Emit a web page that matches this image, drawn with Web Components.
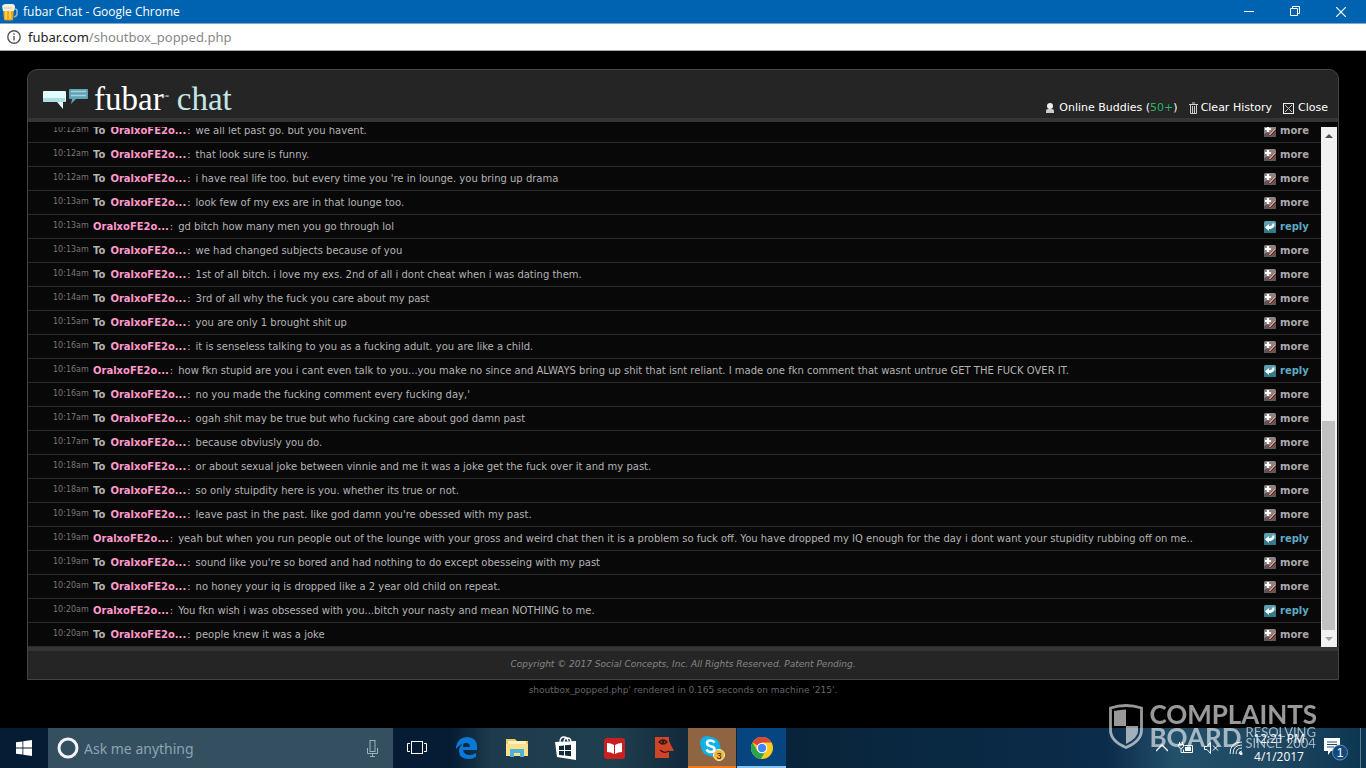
<!DOCTYPE html>
<html lang="en">
<head>
<meta charset="utf-8">
<title>fubar Chat</title>
<style>
    html, body { height: 100%; }
    body {
        margin: 0;
        display: flex;
        flex-direction: column;
        overflow: hidden;
        background: #000;
        color: #b4b4b4;
        font-family: "DejaVu Sans", Verdana, sans-serif;
        font-size: 10px;
    }
</style>
</head>
<body>
<window-bar>fubar Chat - Google Chrome</window-bar>
<address-bar host="fubar.com">/shoutbox_popped.php</address-bar>
<chat-page>
    <chat-message time="10:12am" to>we all let past go. but you havent.</chat-message>
    <chat-message time="10:12am" to>that look sure is funny.</chat-message>
    <chat-message time="10:12am" to>i have real life too. but every time you 're in lounge. you bring up drama</chat-message>
    <chat-message time="10:13am" to>look few of my exs are in that lounge too.</chat-message>
    <chat-message time="10:13am">gd bitch how many men you go through lol</chat-message>
    <chat-message time="10:13am" to>we had changed subjects because of you</chat-message>
    <chat-message time="10:14am" to>1st of all bitch. i love my exs. 2nd of all i dont cheat when i was dating them.</chat-message>
    <chat-message time="10:14am" to>3rd of all why the fuck you care about my past</chat-message>
    <chat-message time="10:15am" to>you are only 1 brought shit up</chat-message>
    <chat-message time="10:16am" to>it is senseless talking to you as a fucking adult. you are like a child.</chat-message>
    <chat-message time="10:16am">how fkn stupid are you i cant even talk to you...you make no since and ALWAYS bring up shit that isnt reliant. I made one fkn comment that wasnt untrue GET THE FUCK OVER IT.</chat-message>
    <chat-message time="10:16am" to>no you made the fucking comment every fucking day,'</chat-message>
    <chat-message time="10:17am" to>ogah shit may be true but who fucking care about god damn past</chat-message>
    <chat-message time="10:17am" to>because obviusly you do.</chat-message>
    <chat-message time="10:18am" to>or about sexual joke between vinnie and me it was a joke get the fuck over it and my past.</chat-message>
    <chat-message time="10:18am" to>so only stuipdity here is you. whether its true or not.</chat-message>
    <chat-message time="10:19am" to>leave past in the past. like god damn you're obessed with my past.</chat-message>
    <chat-message time="10:19am">yeah but when you run people out of the lounge with your gross and weird chat then it is a problem so fuck off. You have dropped my IQ enough for the day i dont want your stupidity rubbing off on me..</chat-message>
    <chat-message time="10:19am" to>sound like you're so bored and had nothing to do except obesseing with my past</chat-message>
    <chat-message time="10:20am" to>no honey your iq is dropped like a 2 year old child on repeat.</chat-message>
    <chat-message time="10:20am">You fkn wish i was obsessed with you...bitch your nasty and mean NOTHING to me.</chat-message>
    <chat-message time="10:20am" to>people knew it was a joke</chat-message>
    <span slot="copyright">Copyright © 2017 Social Concepts, Inc. All Rights Reserved. Patent Pending.</span>
    <span slot="rendered">shoutbox_popped.php' rendered in 0.165 seconds on machine '215'.</span>
</chat-page>
<task-bar></task-bar>
<board-mark></board-mark>

<script>
class BaseElement extends HTMLElement {
    constructor() {
        super();
        this.attachShadow({mode: "open"});
    }

    connectedCallback() {
        this.shadowRoot.innerHTML = this.getTemplate();
    }
}

class WindowBar extends BaseElement {
    getTemplate() {
        return `
        <style>
            :host {
                display: flex;
                align-items: center;
                flex: none;
                height: 23px;
                background: #0063b1;
                color: #fff;
                font: 12px "Open Sans", sans-serif;
            }
            svg { display: block; }
            .logo { margin: 0 5px 0 1px; }
            .title { flex: 1; }
            button {
                width: 46px;
                height: 23px;
                padding: 0;
                border: 0;
                background: none;
                display: grid;
                place-items: center;
            }
            button:last-child { margin-right: 2px; }
        </style>
        <svg class="logo" width="17" height="18" viewBox="0 0 17 18">
            <path d="M12 6h2q2 0 2 2v3q0 2-3 3" fill="none" stroke="#8fb6cf" stroke-width="1.600"/>
            <path d="M2 5h11l-1 12q-4 1-9 0z" fill="#f0a818"/>
            <path d="M5 8v8M9 8v8" stroke="#ffd966" stroke-width="1.500"/>
            <path d="M1 3q1-2 4-2h6q3 0 3 3l-1 4H2z" fill="#f4f1dc"/>
            <path d="M3 5h8" stroke="#c9c9b0"/>
        </svg>
        <span class="title"><slot></slot></span>
        <button aria-label="Minimize"><svg width="10" height="10"><path d="M0 4.500h10" stroke="#fff"/></svg></button>
        <button aria-label="Restore"><svg width="11" height="11" fill="none" stroke="#fff"><path d="M.5 2.500h7v7h-7zM2.500 2.500v-2h7v7h-2"/></svg></button>
        <button aria-label="Close window"><svg width="10" height="10"><path d="M0 0l10 10M10 0L0 10" stroke="#fff" stroke-width="1.200"/></svg></button>
        `;
    }
}

class AddressBar extends BaseElement {
    getTemplate() {
        return `
        <style>
            :host {
                display: flex;
                align-items: center;
                flex: none;
                box-sizing: border-box;
                height: 28px;
                padding-left: 7px;
                gap: 7px;
                background: #fff;
                border-top: 1px solid #7fa9cc;
                border-bottom: 1px solid #aaa;
                color: #888;
                font: 13px "Noto Sans", sans-serif;
            }
            b { font-weight: normal; color: #222; }
        </style>
        <svg width="14" height="14" fill="none" stroke="#555" stroke-width="1.400">
            <circle cx="7" cy="7" r="6.200"/><path d="M7 6v4.500M7 3.300v1.500"/>
        </svg>
        <span><b>${this.getAttribute("host")}</b><slot></slot></span>
        `;
    }
}

class ChatMessage extends BaseElement {
    getAction() {
        if (this.hasAttribute("to")) {
            return `
            <a href="#" class="more">
                <svg width="12" height="12" viewBox="0 0 12 12">
                    <rect width="12" height="12" rx="1.500" fill="#8b8482"/>
                    <path d="M0 12V9l4-2 3 5zM12 6v6H7z" fill="#5c5654"/>
                    <path d="M4 1v6M1 4h6" stroke="#fff" stroke-width="2.200"/>
                    <path d="M5.500 10.500l6-6" stroke="#5a201c" stroke-width="3"/>
                    <path d="M5.500 10l5.500-6" stroke="#dda49c" stroke-width="1.400"/>
                </svg>more</a>`;
        }
        return `
            <a href="#" class="reply">
                <svg width="12" height="12" viewBox="0 0 12 12">
                    <rect width="12" height="12" rx="1.500" fill="#5a9fb0"/>
                    <path d="M0 6h12v4.500q0 1.500-1.500 1.500h-9Q0 12 0 10.500z" fill="#34788c"/>
                    <path d="M1 6.500l4-3.500v2.300q3.500 0 3.500-2.800h2q.3 5.500-5.500 5.500v2z" fill="#fff"/>
                </svg>reply</a>`;
    }

    getTemplate() {
        const to = this.hasAttribute("to") ? `<b>To</b>` : "";
        return `
        <style>
            :host {
                display: flex;
                flex: none;
                box-sizing: border-box;
                height: 24px;
                line-height: 23px;
                padding: 0 9px 0 25px;
                border-bottom: 1px solid #2b2b2b;
                white-space: nowrap;
            }
            time { width: 40px; font-size: 8px; line-height: 21px; color: #777; }
            p { display: flex; gap: 5px; flex: 1; min-width: 0; margin: 0; overflow: hidden; }
            .name { font-weight: bold; color: #ff99cc; text-decoration: none; }
            .colon { margin-left: 1px; }
            .more, .reply {
                display: flex;
                align-items: center;
                gap: 4px;
                width: 48px;
                font-weight: bold;
                color: #aaa;
                text-decoration: none;
            }
            .reply { color: #5fa9c4; }
        </style>
        <time>${this.getAttribute("time")}</time>
        <p>${to}<span><a href="#" class="name">OralxoFE2o...</a><span class="colon">:</span></span><span><slot></slot></span></p>
        ${this.getAction()}
        `;
    }
}

class ScrollTrack extends BaseElement {
    getTemplate() {
        return `
        <style>
            :host {
                display: grid;
                grid-template-rows: 17px 277fr 209fr 17px;
                flex: none;
                width: 16px;
                background: #f1f1f1;
            }
            svg { margin: auto; }
            .thumb { grid-row: 3; margin: 0 2px 0 1px; background: #c1c1c1; }
            .down { grid-row: 4; }
        </style>
        <svg width="8" height="4"><path d="M0 4l4-4 4 4z" fill="#505050"/></svg>
        <div class="thumb"></div>
        <svg class="down" width="8" height="4"><path d="M0 0l4 4 4-4z" fill="#a3a3a3"/></svg>
        `;
    }
}

class ChatPage extends BaseElement {
    getTemplate() {
        return `
        <style>
            :host {
                display: flex;
                flex-direction: column;
                flex: 1;
                min-height: 0;
                padding: 18px 27px 0;
            }
            .panel {
                display: flex;
                flex-direction: column;
                flex: 1;
                min-height: 0;
                border: 1px solid #444;
                border-radius: 10px 10px 0 0;
                background: #252525;
                overflow: hidden;
            }
            header {
                display: flex;
                align-items: flex-end;
                justify-content: space-between;
                box-sizing: border-box;
                height: 52px;
                padding: 0 10px 0 14px;
                border-bottom: 4px solid #353535;
            }
            h1 {
                display: flex;
                align-items: center;
                gap: 6px;
                margin: 0;
                font: 33px/38px "Liberation Serif", serif;
                color: #fff;
            }
            h1 span { color: #c5e6e6; }
            h1 sup { font-size: 5px; vertical-align: 12px; line-height: 0; }
            nav { display: flex; gap: 11px; font-size: 11px; line-height: 20px; }
            nav a { display: flex; align-items: center; gap: 3px; color: #fff; text-decoration: none; }
            nav a:first-child, nav a:last-child { gap: 4px; }
            nav b { font-weight: normal; color: #27b565; }
            .log {
                display: flex;
                flex: 1;
                min-height: 0;
                padding: 5px 1px 0 0;
                background: #080808;
            }
            .rows {
                display: flex;
                flex-direction: column;
                justify-content: flex-end;
                flex: 1;
                min-width: 0;
                overflow: hidden;
            }
            footer {
                height: 28px;
                border-top: 4px solid #353535;
                line-height: 26px;
                text-align: center;
                font-style: italic;
                font-size: 9px;
                color: #858585;
            }
            .rendered { height: 48px; line-height: 20px; text-align: center; font-size: 9px; color: #666; }
        </style>
        <div class="panel">
            <header>
                <h1>
                    <svg width="46" height="22" viewBox="0 0 46 22">
                        <path d="M1 3h22q1 0 1 1v9q0 1-1 1h-2v7l-6-7H2q-1 0-1-1V4q0-1 1-1z" fill="#e4fbfb"/>
                        <path d="M1 10h22v3q0 1-1 1H2q-1 0-1-1z" fill="#aee0e2"/>
                        <path d="M28 1h17q1 0 1 1v8q0 1-1 1H34l-5 5 1-5h-2q-1 0-1-1V2q0-1 1-1z" fill="#5fa3b5"/>
                        <path d="M29 3.500h15M29 7.500h15" stroke="#a9d3dc" stroke-width="1.500"/>
                    </svg>
                    <div>fubar<sup>™</sup> <span>chat</span></div>
                </h1>
                <nav>
                    <a href="#">
                        <svg width="10" height="12" viewBox="0 0 10 12">
                            <circle cx="5" cy="4" r="3" fill="#eee"/>
                            <path d="M1 11V9q0-2 2-2h4q2 0 2 2v2z" fill="#ccc"/>
                        </svg><span>Online Buddies (<b>50+</b>)</span></a>
                    <a href="#">
                        <svg width="9" height="12" viewBox="0 0 9 12" fill="none" stroke="#ccc">
                            <path d="M0 2.500h9M3 1h3M1.500 3v8.500h6V3M3.500 4v7M5.500 4v7"/>
                        </svg>Clear History</a>
                    <a href="#">
                        <svg width="11" height="11" viewBox="0 0 11 11" fill="none" stroke="#eee">
                            <rect x=".5" y=".5" width="10" height="10"/>
                            <path d="M2 2l7 7M9 2L2 9" stroke="#bbb"/>
                        </svg>Close</a>
                </nav>
            </header>
            <div class="log">
                <div class="rows"><slot></slot></div>
                <scroll-track></scroll-track>
            </div>
            <footer><slot name="copyright"></slot></footer>
        </div>
        <div class="rendered"><slot name="rendered"></slot></div>
        `;
    }
}

class TaskBar extends BaseElement {
    getTemplate() {
        return `
        <style>
            :host {
                display: flex;
                flex: none;
                height: 40px;
                color: #fff;
                font: 12px "Open Sans", sans-serif;
                background: linear-gradient(90deg, #051c34 0, #051c34 33%, #1d3b4c 36%, #1f3e4e 45%, #122b3c 50%, #08243a 58%, #0a2a46 75%, #0b2c4b 81%, #23506b 86%, #1f4862 93%, #0c3552 100%);
            }
            button {
                flex: none;
                width: 49px;
                padding: 0;
                border: 0;
                background: none;
                display: grid;
                place-items: center;
            }
            svg { display: block; }
            .start { width: 48px; }
            label {
                display: flex;
                align-items: center;
                box-sizing: border-box;
                width: 345px;
                padding: 0 14px 0 9px;
                gap: 5px;
                background: #344f60;
            }
            input {
                flex: 1;
                min-width: 0;
                padding: 0;
                border: 0;
                outline: 0;
                background: none;
                color: #fff;
                font: 14px "Noto Sans", sans-serif;
            }
            input::placeholder { color: #8da3b2; }
            .view { width: 48px; }
            .edge { width: 51px; }
            .skype { background: #8f6441; box-shadow: inset 0 -2px #f27a1a; width: 48px; margin-right: 1px; }
            .chrome { background: #064580; box-shadow: inset 0 -2px #8cc4f0; }
            .tray { display: flex; align-items: center; margin-left: auto; }
            .icons { display: flex; align-items: center; gap: 10px; margin-right: 3px; }
            .clock { width: 66px; line-height: 18px; text-align: center; }
            .notes { width: 48px; }
            .desktop { width: 5px; height: 40px; border-left: 1px solid #5d7c90; }
        </style>
        <button class="start" aria-label="Start">
            <svg width="16" height="16" viewBox="0 0 16 16"><path d="M0 2.300l6.500-.9v6.200H0zM7.300 1.300L16 0v7.600H7.300zM0 8.400h6.500v6.200L0 13.700zM7.300 8.400H16V16l-8.700-1.300z" fill="#fff"/></svg>
        </button>
        <label>
            <svg width="22" height="22"><circle cx="11" cy="11" r="9" fill="none" stroke="#f2f5f7" stroke-width="3"/></svg>
            <input type="text" placeholder="Ask me anything" aria-label="Ask me anything">
            <svg width="13" height="17" fill="none" stroke="#9eb1be"><rect x="4" y=".5" width="5" height="11"/><path d="M1.500 8v5.500h10V8M6.500 14v2.500M4 16.500h5"/></svg>
        </label>
        <button class="view" aria-label="Task view">
            <svg width="20" height="14" fill="none" stroke="#fff"><rect x="4.500" y=".5" width="11" height="12"/><path d="M3 2.500H.5v8H3M17 2.500h2.500v8H17"/></svg>
        </button>
        <button class="edge" aria-label="Edge">
            <svg width="21" height="22" viewBox="0 0 21 22"><path d="M0 10Q2 0 11 0q10 0 10 10v3H7q1 5 7 5 3 0 6-2v4q-3 2-7 2-10 0-10-8 0-5 5-8-1 1-1 4h7q0-4-4-4-5 0-10 6z" fill="#0a78d7"/></svg>
        </button>
        <button aria-label="File Explorer">
            <svg width="22" height="20" viewBox="0 0 22 20"><path d="M0 1h9l2 2h11v15H0z" fill="#f0c75e"/><path d="M2 3h18v5H2z" fill="#fff2bd"/><path d="M0 6h22v12H0z" fill="#fbdf8b"/><path d="M4 19v-8h14v8h-4v-4H8v4z" fill="#4fb3d9"/></svg>
        </button>
        <button aria-label="Store">
            <svg width="22" height="24" viewBox="0 0 22 24"><path d="M5 6q0-5 4-5 3 0 4 4M9 6q0-4 3.500-4T16 6" fill="none" stroke="#fff" stroke-width="1.300"/><path d="M0 6l21-1v19L2 21z" fill="#fff"/><path d="M4 10l5-.5V14H4zM10 9.300l6-.5V14h-6zM4 15h5v4.500L4 19zM10 15h6v5.300l-6-.7z" fill="#10293b"/></svg>
        </button>
        <button aria-label="Reader">
            <svg width="21" height="21" viewBox="0 0 21 21"><rect width="21" height="21" rx="3" fill="#c9201f"/><path d="M3 5q4 0 7 2v9q-3-2-7-2zM18 5q-4 0-7 2v9q3-2 7-2z" fill="#fff"/></svg>
        </button>
        <button aria-label="Face">
            <svg width="20" height="22" viewBox="0 0 20 22"><path d="M1 0h14v4l5 10h-5v7H1z" fill="#cf4527"/><path d="M5 5q4-4 8 0-4 4-8 0zM6 13q4 4 9 1" fill="none" stroke="#38150e" stroke-width="1.200"/><circle cx="9" cy="5" r="1.400" fill="#222"/></svg>
        </button>
        <button class="skype" aria-label="Skype">
            <svg width="26" height="26" viewBox="0 0 26 26">
                <circle cx="8" cy="8" r="7" fill="#0db2ea"/><circle cx="15" cy="15" r="7" fill="#0db2ea"/><circle cx="11.500" cy="11.500" r="9.500" fill="#0db2ea"/>
                <path d="M15.500 7.500Q14 5.500 11.500 5.500 8 5.500 8 8q0 2.500 3.700 3.200t3.800 3Q15.500 17 12 17q-3 0-4.500-2.500" fill="none" stroke="#fff" stroke-width="2.600"/>
                <circle cx="20" cy="20" r="5.500" fill="#f5b53c" stroke="#fff0b0"/>
                <text x="20" y="23.500" text-anchor="middle" font-size="9" fill="#222">3</text>
            </svg>
        </button>
        <button class="chrome" aria-label="Chrome">
            <svg width="22" height="22" viewBox="0 0 22 22">
                <circle cx="11" cy="11" r="11" fill="#fbcb1f"/>
                <path d="M11 11L1.500 5.500A11 11 0 0 1 20.500 5.500H11z" fill="#db4437"/>
                <path d="M1.500 5.500A11 11 0 0 0 10 22l5-9-8.500 1z" fill="#2da352"/>
                <circle cx="11" cy="11" r="5.300" fill="#fff"/><circle cx="11" cy="11" r="4.200" fill="#4285f4"/>
            </svg>
        </button>
        <div class="tray">
            <div class="icons">
                <svg width="12" height="8"><path d="M0 7l6-6 6 6" fill="none" stroke="#fff" stroke-width="1.300"/></svg>
                <svg width="16" height="12" fill="none" stroke="#fff"><path d="M6.500 3.500h8v7h-9v-3M1.500 0v2M4.500 0v2M.5 2.500h5v2q-1 2-2.500 2t-2.500-2zM3 7v3.500h3"/><path d="M7 5h6v4H7z" fill="#fff" stroke="none"/></svg>
                <svg width="15" height="12" fill="none" stroke="#fff"><path d="M.5 4.500H3l3.500-4v11l-3.500-4H.5zM9 3.500l5 5M14 3.500l-5 5"/></svg>
                <svg width="14" height="14" fill="none" stroke="#e8eef2"><path d="M1 13Q1 1 13 1M4 13q0-9 9-9M7 13q0-6 6-6M10 13q0-3 3-3"/><circle cx="12" cy="12.500" r="1.500" fill="#fff" stroke="none"/></svg>
            </div>
            <div class="clock">12:21 PM<br>4/1/2017</div>
            <button class="notes" aria-label="Notifications">
                <svg width="26" height="26" viewBox="0 0 26 26">
                    <path d="M1 3h16v13H8l-3 4v-4H1z" fill="#fff"/><path d="M4 7h10M4 9.500h10M4 12h7" stroke="#244c66"/>
                    <circle cx="17" cy="17.500" r="7.500" fill="#12497c" stroke="#6a91b0"/>
                    <text x="17" y="22" text-anchor="middle" font-size="12" fill="#fff">1</text>
                </svg>
            </button>
            <div class="desktop"></div>
        </div>
        `;
    }
}

/* translucent badge laid over the corner of the screen */
class BoardMark extends BaseElement {
    getTemplate() {
        return `
        <style>
            :host {
                position: fixed;
                right: 49px;
                bottom: 19px;
                display: flex;
                align-items: center;
                gap: 6px;
                color: #fff;
                opacity: 0.6;
                pointer-events: none;
                font: bold 26px/23px Lato, sans-serif;
            }
            .bottom { display: flex; align-items: center; gap: 4px; }
            small { font: 13px/11px Lato, sans-serif; }
        </style>
        <svg width="34" height="45" viewBox="0 0 34 45">
            <path d="M1.500 4Q17-1 32.500 4v22q0 11-15.500 17.500Q1.500 37 1.500 26z" fill="none" stroke="#fff" stroke-width="2.800"/>
            <path d="M17 5.500V22H5V7q6-1.500 12-1.500zM17 22h12v5q0 7-12 13z" fill="#fff"/>
        </svg>
        <div>
            <div>COMPLAINTS</div>
            <div class="bottom">BOARD <small>RESOLVING<br>SINCE 2004</small></div>
        </div>
        `;
    }
}

customElements.define("window-bar", WindowBar);
customElements.define("address-bar", AddressBar);
customElements.define("chat-message", ChatMessage);
customElements.define("scroll-track", ScrollTrack);
customElements.define("chat-page", ChatPage);
customElements.define("task-bar", TaskBar);
customElements.define("board-mark", BoardMark);
</script>
</body>
</html>
